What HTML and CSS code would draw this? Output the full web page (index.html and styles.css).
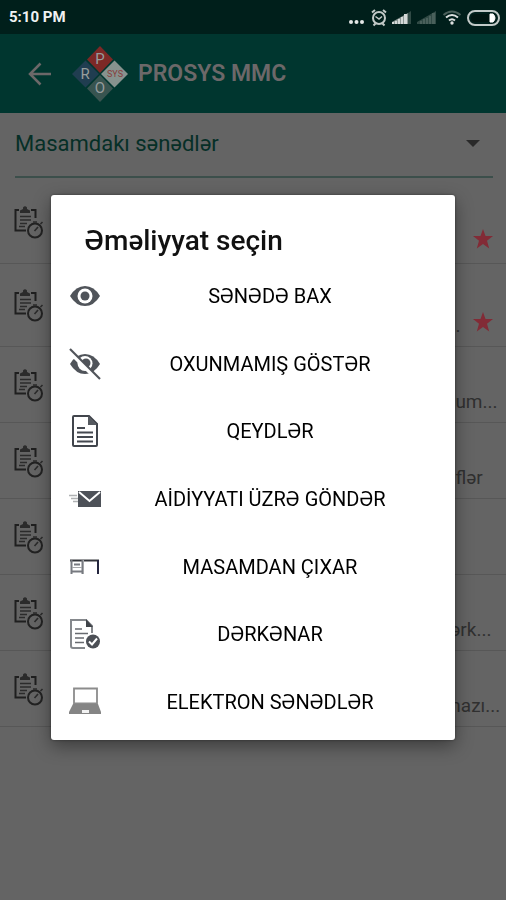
FILE: index.html
```html
<!DOCTYPE html>
<html lang="az">
<head>
<meta charset="utf-8">
<meta name="viewport" content="width=device-width, initial-scale=1">
<title>PROSYS MMC</title>
<link rel="stylesheet" href="styles.css">
</head>
<body>
<svg class="defs" aria-hidden="true">
  <symbol id="task" viewBox="0 0 30 34">
    <path d="M5 5H1.500V25.500H12M17 5H21.500V13" fill="none" stroke="#1f1f1f" stroke-width="2"/>
    <path d="M6 8V5.500L9 4V2.500Q11 0 13 2.500V4L16 5.500V8Z" fill="#2b2b2b"/>
    <path d="M6 11.500H17M6 15H17M6 18.500H13M5 21.500H11" stroke="#2b2b2b" stroke-width="1.600"/>
    <circle cx="21" cy="25.500" r="7" fill="none" stroke="#222" stroke-width="2"/>
    <path d="M20.500 26L24 22M19 17H23M26.500 19L28.500 17" stroke="#2b2b2b" stroke-width="1.600"/>
  </symbol>
  <symbol id="star" viewBox="0 0 20 20">
    <path d="M10 0L12.500 7H20L14 11.700L16.200 19.500L10 15L3.800 19.500L6 11.700L0 7H7.500Z" fill="#822b36"/>
  </symbol>
</svg>

<header class="top">
  <div class="status">
    <span>5:10 PM</span>
    <svg width="154" height="20" viewBox="0 0 154 20" aria-hidden="true">
      <g fill="#e4e8e7"><circle cx="3" cy="15" r="2"/><circle cx="8.500" cy="15" r="2"/><circle cx="14" cy="15" r="2"/></g>
      <g fill="none" stroke="#c3cac8" stroke-width="2"><circle cx="31" cy="11" r="6"/><path d="M24 5.500L27 3M38 5.500L35 3M27.500 16.500L25.500 18.500M34.500 16.500L36.500 18.500"/><path d="M27.500 9.500L31 12L34 9.500" stroke-width="1.500"/></g>
      <path d="M44 17V15L60 6V17Z" fill="#8b9794"/>
      <path d="M44 15H46V17H44ZM47 14H49V17H47ZM50 12H52V17H50ZM53 10H55V17H53ZM56 7H59V17H56Z" fill="#d3d8d7"/>
      <path d="M60 6L63 4V17H60ZM69 17V15L88 4V17Z" fill="#304a45"/>
      <path d="M72 14H74V17H72ZM75 12H77V17H75ZM78 11H80V17H78ZM81 9H83V17H81ZM84 6H87V17H84Z" fill="#49605b"/>
      <g fill="none" stroke-width="2"><path d="M95.500 8Q104 1 112.500 8" stroke="#4b605b"/><path d="M98 10.500Q104 5.500 110 10.500M101 13.500Q104 11 107 13.500" stroke="#dce0df"/></g>
      <circle cx="104" cy="16" r="1.700" fill="#dce0df"/>
      <rect x="120" y="4" width="31" height="14" rx="7" fill="none" stroke="#c2cac8" stroke-width="2"/>
      <rect x="123" y="7" width="25" height="8" rx="4" fill="#001511"/><path d="M142 7H145Q149 11 145 15H142Z" fill="#fff" stroke="#fff"/>
    </svg>
  </div>
  <div class="appbar">
    <button class="back" type="button" aria-label="Geri">
      <svg width="24" height="24" viewBox="0 0 24 24"><path d="M12.500 1.500L2 12L12.500 22.500M2 12H23" fill="none" stroke="#6c6869" stroke-width="2.500"/></svg>
    </button>
    <svg class="logo" width="56" height="58" viewBox="0 0 56 58">
      <path d="M28 1L41 14.500L28 28L15 14.500Z" fill="#7c2826"/>
      <path d="M13.500 15.500L27 29L13.500 42.500L0 29Z" fill="#203d50"/>
      <path d="M42.500 15.500L56 29L42.500 42.500L29 29Z" fill="#87928e"/>
      <path d="M28 30L41 43.500L28 57L15 43.500Z" fill="#385450"/>
      <g class="mark"><text x="28" y="19">P</text><text x="13" y="34">R</text><text x="28" y="48">O</text></g>
      <text class="mark-small" x="43" y="32">SYS</text>
    </svg>
    <h1>PROSYS MMC</h1>
  </div>
</header>

<main>
  <div class="folder">
    <select aria-label="Qovluq"><option>Masamdakı sənədlər</option></select>
    <svg class="caret" width="14" height="7" viewBox="0 0 14 7" aria-hidden="true"><path d="M0 0H14L7 7Z" fill="#292929"/></svg>
  </div>
  <ul class="docs">
    <li class="marked"><svg class="task"><use href="#task"/></svg><svg class="star"><use href="#star"/></svg></li>
    <li class="marked"><svg class="task"><use href="#task"/></svg><span class="tail">.</span><svg class="star"><use href="#star"/></svg></li>
    <li><svg class="task"><use href="#task"/></svg><span class="tail">um...</span></li>
    <li><svg class="task"><use href="#task"/></svg><span class="tail">flər</span></li>
    <li><svg class="task"><use href="#task"/></svg></li>
    <li><svg class="task"><use href="#task"/></svg><span class="tail cut">ərk...</span></li>
    <li><svg class="task"><use href="#task"/></svg><span class="tail cut">nazı...</span></li>
  </ul>
</main>

<div class="overlay">
  <section class="dialog" role="dialog" aria-labelledby="dialog-title">
    <h2 id="dialog-title">Əməliyyat seçin</h2>
    <div class="actions">
      <button type="button">
        <svg viewBox="0 0 32 32"><path d="M1 16Q7 6 16 6T31 16Q25 26 16 26T1 16Z" fill="#50545a"/><circle cx="16" cy="16" r="7.500" fill="#fff"/><circle cx="16" cy="16" r="4.500" fill="#50545a"/></svg>
        <span>SƏNƏDƏ BAX</span></button>
      <button type="button">
        <svg viewBox="0 0 32 32"><path d="M1 16Q7 6 16 6T31 16Q25 26 16 26T1 16Z" fill="#50545a"/><circle cx="16" cy="15.500" r="7.500" fill="#fff"/><circle cx="17" cy="15" r="4.500" fill="#50545a"/><path d="M5 8L26 29" stroke="#fff" stroke-width="4.500"/><path d="M1 1L31 31" stroke="#50545a" stroke-width="2.200"/></svg>
        <span>OXUNMAMIŞ GÖSTƏR</span></button>
      <button type="button">
        <svg viewBox="0 0 32 32"><path d="M5 1H20L28 9V30Q28 31 27 31H5Q4 31 4 30V2Q4 1 5 1Z" fill="#fff" stroke="#41454c" stroke-width="2"/><path d="M19 1L28 10H19Z" fill="#565a60"/><path d="M8 13H16M8 17.500H24M8 22H24M8 26.500H24" stroke="#454950" stroke-width="2"/></svg>
        <span>QEYDLƏR</span></button>
      <button type="button">
        <svg viewBox="0 0 32 32"><path d="M9 8H32V24H9Z" fill="#4d5158"/><path d="M10 9L20.500 18L31 9" fill="none" stroke="#fff" stroke-width="2"/><path d="M0 12.500H8M2 15.500H9M4 18.500H9" stroke="#b0b2b4" stroke-width="1.600"/></svg>
        <span>AİDİYYATI ÜZRƏ GÖNDƏR</span></button>
      <button type="button">
        <svg viewBox="0 0 32 32"><path d="M1 9.500H30" stroke="#34363b" stroke-width="2"/><path d="M2.500 9V23M13.500 9V23M3 20.500H13M5 13.500H11" fill="none" stroke="#777a80" stroke-width="2"/><path d="M3 16.500H13M14.500 9V23" stroke="#a5a7aa"/><path d="M29 9V23" stroke="#24263e" stroke-width="2"/></svg>
        <span>MASAMDAN ÇIXAR</span></button>
      <button type="button">
        <svg viewBox="0 0 32 32"><path d="M16 30H4Q2 30 2 28V2H17L23 8V15" fill="none" stroke="#85888c" stroke-width="2"/><path d="M17 1V9H24Z" fill="#404449"/><path d="M6 11H13M6 15.500H19M6 20H15M6 24.500H15" stroke="#686b70" stroke-width="1.700"/><circle cx="24" cy="23.500" r="7" fill="#4c5056"/><path d="M20 23.500L23 26.500L28 20.500" fill="none" stroke="#fff" stroke-width="2"/></svg>
        <span>DƏRKƏNAR</span></button>
      <button type="button">
        <svg viewBox="0 0 32 32"><path d="M5 2.500H28V17.500H5Z" fill="#fff" stroke="#8c8c8c" stroke-width="1.800"/><path d="M4 18H29L32 26V28H0V26Z" fill="#858585"/><path d="M13 24H20V27H13Z" fill="#f2f2f2"/></svg>
        <span>ELEKTRON SƏNƏDLƏR</span></button>
    </div>
  </section>
</div>
</body>
</html>
```
FILE: styles.css
```css
* { box-sizing: border-box; }

body {
  margin: 0;
  min-height: 100vh;
  background: #646464;
  font-family: Roboto, "Noto Sans", sans-serif;
}

button, select { font: inherit; color: inherit; border: 0; background: none; padding: 0; }
h1, h2, ul { margin: 0; padding: 0; }
.defs { position: absolute; width: 0; height: 0; }

.status {
  display: flex;
  align-items: center;
  justify-content: space-between;
  height: 34px;
  padding: 0 4px 0 9px;
  background: #001f1b;
  color: #f0f2f2;
  font-size: 15px;
  font-weight: 700;
}

.appbar {
  display: flex;
  align-items: center;
  height: 79px;
  padding: 0 28px;
  background: #00362f;
}

.back { display: flex; }
.logo { margin: 0 10px 0 20px; }
.mark { font-size: 15px; fill: #969c9c; text-anchor: middle; }
.mark-small { font-size: 9px; fill: #873e3d; text-anchor: middle; }

h1 {
  color: #6c6869;
  font-size: 23px;
  line-height: 28px;
  font-weight: 600;
}

.folder {
  display: flex;
  align-items: center;
  height: 65px;
  margin: 0 13px 0 15px;
  padding-bottom: 2px;
  border-bottom: 2px solid #3c4f4b;
}

.folder select {
  flex: 1;
  appearance: none;
  color: #062f27;
  font-size: 22px;
  line-height: 32px;
}

.caret { margin-right: 13px; }

.docs { padding-top: 3px; list-style: none; }

.docs li {
  display: flex;
  align-items: center;
  position: relative;
  height: 76px;
  padding-left: 14px;
  border-bottom: 1px solid #575757;
}

.docs .marked { height: 83px; }
.task { width: 30px; height: 34px; }

.star {
  position: absolute;
  right: 13px;
  bottom: 14px;
  width: 20px;
  height: 20px;
}

.tail {
  position: absolute;
  left: 90%;
  bottom: 8px;
  color: #303030;
  font-size: 19px;
  line-height: 24px;
}

.cut { left: 89%; }

.overlay {
  position: fixed;
  inset: 34px 0 0;
  display: flex;
  align-items: center;
  justify-content: center;
}

.dialog {
  width: 80%;
  padding-bottom: 4px;
  border-radius: 3px;
  background: #fff;
  color: #111;
  box-shadow: 0 6px 18px rgba(0, 0, 0, 0.4), 0 0 3px rgba(0, 0, 0, 0.4);
}

h2 {
  padding: 30px 34px 6px;
  font-size: 28px;
  line-height: 32px;
  font-weight: 500;
}

.actions {
  display: grid;
  grid-auto-rows: 1fr;
  height: 473px;
}

.actions button {
  display: flex;
  align-items: center;
  padding: 0 16px 0 18px;
  color: #000;
  font-size: 20px;
  font-weight: 450;
}

.actions svg { width: 32px; height: 32px; }
.actions span { flex: 1; text-align: center; }
```
